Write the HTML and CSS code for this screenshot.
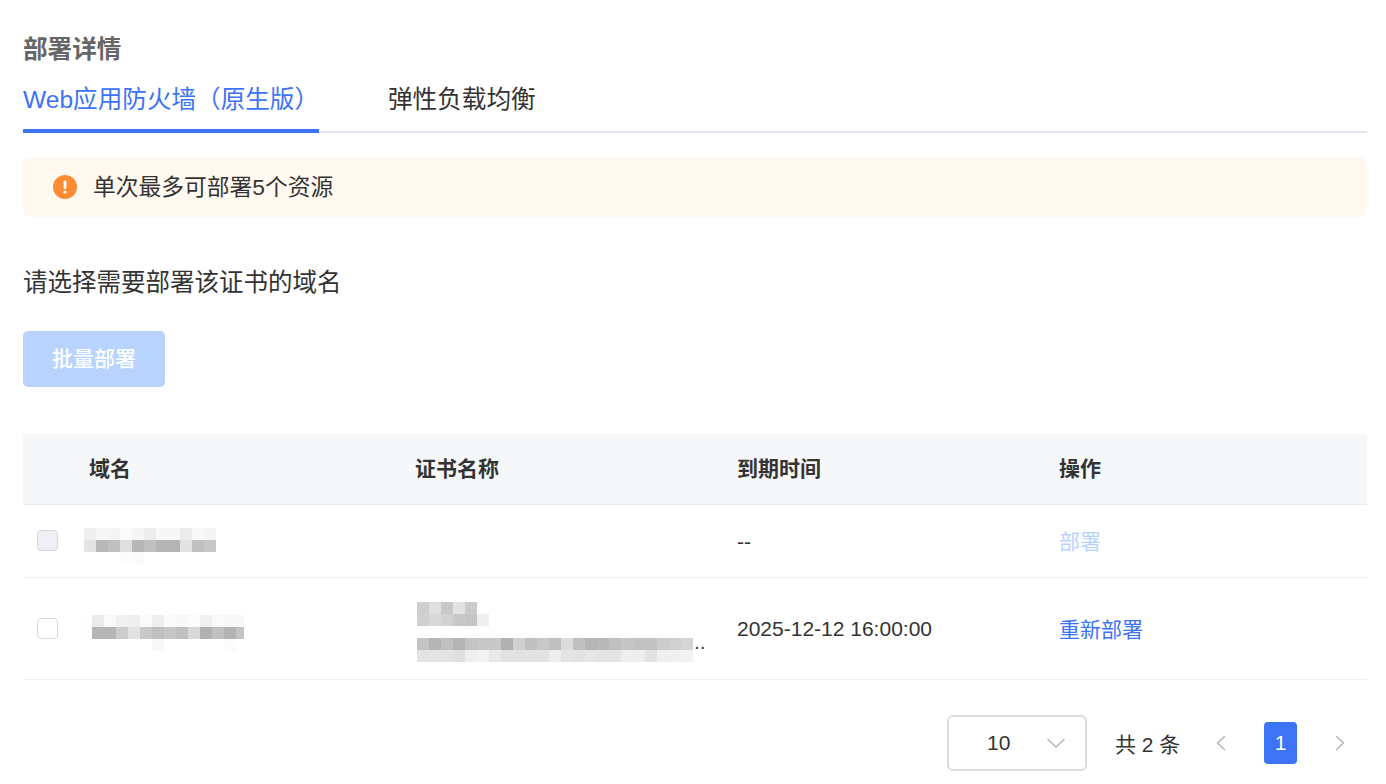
FILE: index.html
```html
<!DOCTYPE html>
<html lang="zh-CN">
<head>
<meta charset="utf-8">
<title>部署详情</title>
<link rel="stylesheet" href="styles.css">
</head>
<body>
<main class="page">
  <h1 class="title">部署详情</h1>
  <nav class="tabs">
    <a class="tab tab-active">Web应用防火墙（原生版）</a>
    <a class="tab">弹性负载均衡</a>
  </nav>
  <div class="alert">
    <svg class="alert-icon" viewBox="0 0 24 24" width="24" height="24"><circle cx="12" cy="12" r="12" fill="#ff8c33"/><rect x="10.6" y="5.5" width="2.8" height="8.5" rx="1.2" fill="#fff"/><circle cx="12" cy="17" r="1.6" fill="#fff"/></svg>
    <span class="alert-text">单次最多可部署5个资源</span>
  </div>
  <p class="label">请选择需要部署该证书的域名</p>
  <button class="btn-batch" disabled>批量部署</button>
  <table class="table">
    <colgroup><col class="c0"><col class="c1"><col class="c2"><col class="c3"><col class="c4"></colgroup>
    <thead>
      <tr><th></th><th>域名</th><th>证书名称</th><th>到期时间</th><th>操作</th></tr>
    </thead>
    <tbody>
      <tr class="row-a">
        <td><span class="check check-disabled"></span></td>
        <td>
          <svg class="mosaic m-a" width="132" height="36" viewBox="0 0 132 36" shape-rendering="crispEdges">
            <rect x="0" y="0" width="12" height="12" fill="#efefef"/><rect x="12" y="0" width="12" height="12" fill="#f6f6f6"/><rect x="24" y="0" width="12" height="12" fill="#f5f5f5"/><rect x="36" y="0" width="12" height="12" fill="#fafafa"/><rect x="48" y="0" width="12" height="12" fill="#f5f5f5"/><rect x="60" y="0" width="12" height="12" fill="#ececec"/><rect x="72" y="0" width="24" height="12" fill="#f7f7f7"/><rect x="96" y="0" width="12" height="12" fill="#ebebeb"/><rect x="108" y="0" width="12" height="12" fill="#f8f8f8"/><rect x="120" y="0" width="12" height="12" fill="#f5f5f5"/>
            <rect x="0" y="12" width="12" height="12" fill="#e4e4e4"/><rect x="12" y="12" width="12" height="12" fill="#b9b9b9"/><rect x="24" y="12" width="12" height="12" fill="#c0c0c0"/><rect x="36" y="12" width="12" height="12" fill="#dfdfdf"/><rect x="48" y="12" width="12" height="12" fill="#b6b6b6"/><rect x="60" y="12" width="12" height="12" fill="#bfbfbf"/><rect x="72" y="12" width="24" height="12" fill="#b4b4b4"/><rect x="96" y="12" width="12" height="12" fill="#e2e2e2"/><rect x="108" y="12" width="12" height="12" fill="#c0c0c0"/><rect x="120" y="12" width="12" height="12" fill="#c8c8c8"/>
            <rect x="36" y="24" width="12" height="12" fill="#fcfcfc"/><rect x="48" y="24" width="12" height="12" fill="#fafafa"/>
          </svg>
        </td>
        <td></td>
        <td class="cell-latin">--</td>
        <td><a class="link link-disabled">部署</a></td>
      </tr>
      <tr class="row-b">
        <td><span class="check"></span></td>
        <td>
          <svg class="mosaic m-b" width="164" height="36" viewBox="0 0 164 36" shape-rendering="crispEdges">
            <rect x="0" y="0" width="12" height="24" fill="#fdfdfd"/>
            <rect x="12" y="0" width="12" height="12" fill="#ebebeb"/><rect x="24" y="0" width="12" height="12" fill="#f9f9f9"/><rect x="36" y="0" width="12" height="12" fill="#f0f0f0"/><rect x="48" y="0" width="12" height="12" fill="#eeeeee"/><rect x="60" y="0" width="12" height="12" fill="#fafafa"/><rect x="72" y="0" width="12" height="12" fill="#eeeeee"/><rect x="84" y="0" width="12" height="12" fill="#fafafa"/><rect x="96" y="0" width="12" height="12" fill="#f8f8f8"/><rect x="108" y="0" width="12" height="12" fill="#fbfbfb"/><rect x="120" y="0" width="12" height="12" fill="#f0f0f0"/><rect x="132" y="0" width="12" height="12" fill="#f9f9f9"/><rect x="144" y="0" width="20" height="12" fill="#f8f8f8"/>
            <rect x="12" y="12" width="24" height="12" fill="#b5b5b5"/><rect x="36" y="12" width="12" height="12" fill="#cccccc"/><rect x="48" y="12" width="12" height="12" fill="#e2e2e2"/><rect x="60" y="12" width="12" height="12" fill="#c8c8c8"/><rect x="72" y="12" width="12" height="12" fill="#c0c0c0"/><rect x="84" y="12" width="12" height="12" fill="#c6c6c6"/><rect x="96" y="12" width="12" height="12" fill="#c0c0c0"/><rect x="108" y="12" width="12" height="12" fill="#d8d8d8"/><rect x="120" y="12" width="12" height="12" fill="#b0b0b0"/><rect x="132" y="12" width="12" height="12" fill="#c0c0c0"/><rect x="144" y="12" width="12" height="12" fill="#b2b2b2"/><rect x="156" y="12" width="8" height="12" fill="#c4c4c4"/>
            <rect x="72" y="24" width="12" height="12" fill="#f8f8f8"/><rect x="144" y="24" width="12" height="12" fill="#fbfbfb"/>
          </svg>
        </td>
        <td>
          <div class="cert">
            <svg class="mosaic m-c" width="276" height="60" viewBox="0 0 276 60" shape-rendering="crispEdges">
              <rect x="0" y="0" width="12" height="12" fill="#cfcfcf"/><rect x="12" y="0" width="12" height="12" fill="#dfdfdf"/><rect x="24" y="0" width="12" height="12" fill="#c8c8c8"/><rect x="36" y="0" width="12" height="12" fill="#e2e2e2"/><rect x="48" y="0" width="12" height="12" fill="#cbcbcb"/>
              <rect x="0" y="12" width="12" height="12" fill="#d0d0d0"/><rect x="12" y="12" width="12" height="12" fill="#d8d8d8"/><rect x="24" y="12" width="12" height="12" fill="#d2d2d2"/><rect x="36" y="12" width="12" height="12" fill="#c8c8c8"/><rect x="48" y="12" width="12" height="12" fill="#c4c4c4"/><rect x="60" y="12" width="12" height="12" fill="#efefef"/>
              <rect x="0" y="36" width="12" height="12" fill="#c4c4c4"/><rect x="12" y="36" width="12" height="12" fill="#b4b4b4"/><rect x="24" y="36" width="12" height="12" fill="#c0c0c0"/><rect x="36" y="36" width="12" height="12" fill="#b4b4b4"/><rect x="48" y="36" width="12" height="12" fill="#c4c4c4"/><rect x="60" y="36" width="24" height="12" fill="#c8c8c8"/><rect x="84" y="36" width="12" height="12" fill="#b0b0b0"/><rect x="96" y="36" width="12" height="12" fill="#d0d0d0"/><rect x="108" y="36" width="12" height="12" fill="#c0c0c0"/><rect x="120" y="36" width="12" height="12" fill="#c8c8c8"/><rect x="132" y="36" width="12" height="12" fill="#c0c0c0"/><rect x="144" y="36" width="12" height="12" fill="#dcdcdc"/><rect x="156" y="36" width="12" height="12" fill="#c0c0c0"/><rect x="168" y="36" width="12" height="12" fill="#b4b4b4"/><rect x="180" y="36" width="12" height="12" fill="#b8b8b8"/><rect x="192" y="36" width="12" height="12" fill="#c0c0c0"/><rect x="204" y="36" width="12" height="12" fill="#c6c6c6"/><rect x="216" y="36" width="24" height="12" fill="#c2c2c2"/><rect x="240" y="36" width="12" height="12" fill="#cccccc"/><rect x="252" y="36" width="12" height="12" fill="#d0d0d0"/><rect x="264" y="36" width="12" height="12" fill="#d4d4d4"/>
              <rect x="0" y="48" width="36" height="12" fill="#e4e4e4"/><rect x="36" y="48" width="12" height="12" fill="#e0e0e0"/><rect x="48" y="48" width="12" height="12" fill="#eeeeee"/><rect x="60" y="48" width="12" height="12" fill="#f2f2f2"/><rect x="72" y="48" width="12" height="12" fill="#e8e8e8"/><rect x="84" y="48" width="48" height="12" fill="#e2e2e2"/><rect x="132" y="48" width="12" height="12" fill="#eeeeee"/><rect x="144" y="48" width="12" height="12" fill="#e4e4e4"/><rect x="156" y="48" width="12" height="12" fill="#e2e2e2"/><rect x="168" y="48" width="12" height="12" fill="#e6e6e6"/><rect x="180" y="48" width="24" height="12" fill="#e4e4e4"/><rect x="204" y="48" width="24" height="12" fill="#efefef"/><rect x="228" y="48" width="12" height="12" fill="#e2e2e2"/><rect x="240" y="48" width="12" height="12" fill="#efefef"/><rect x="252" y="48" width="12" height="12" fill="#f0f0f0"/><rect x="264" y="48" width="12" height="12" fill="#f2f2f2"/>
            </svg>
            <span class="dots">..</span>
          </div>
        </td>
        <td class="cell-latin">2025-12-12 16:00:00</td>
        <td><a class="link">重新部署</a></td>
      </tr>
    </tbody>
  </table>
  <div class="pager">
    <div class="select">
      <span class="select-value">10</span>
      <svg class="select-arrow" width="20" height="12" viewBox="0 0 20 12"><path d="M1.5 2 L10 10 L18.500 2" fill="none" stroke="#b5b7bd" stroke-width="1.500"/></svg>
    </div>
    <span class="total">共 2 条</span>
    <svg class="chev chev-prev" width="12" height="18" viewBox="0 0 12 18"><path d="M10 2 L2.500 9 L10 16" fill="none" stroke="#b5b7bd" stroke-width="1.500"/></svg>
    <span class="page-num">1</span>
    <svg class="chev chev-next" width="12" height="18" viewBox="0 0 12 18"><path d="M2 2 L9.500 9 L2 16" fill="none" stroke="#b5b7bd" stroke-width="1.500"/></svg>
  </div>
</main>
</body>
</html>
```

FILE: styles.css
```css
* { box-sizing: border-box; }
html, body { margin: 0; padding: 0; background: #fff; overflow: hidden; height: 100%; }
body { font-family: "Liberation Sans", "Noto Sans CJK SC", sans-serif; color: #333; font-size: 21px; }
.page { padding: 32px 19px 0 23px; }
.title { margin: 0; height: 34px; line-height: 36px; font-size: 24.6px; font-weight: 700; color: #666; }
.tabs { display: flex; gap: 69px; height: 67px; border-bottom: 2px solid #e4e6ef; }
.tab { display: block; height: 67px; line-height: 68px; font-size: 24.6px; color: #333; white-space: nowrap; }
.tab-active { width: 296px; color: #3d73f5; border-bottom: 4px solid #3d73f5; }
.alert { display: flex; align-items: center; gap: 16px; height: 60px; margin-top: 24px; padding-left: 30px; background: #fff9f0; border-radius: 6px; font-size: 22.75px; }
.alert-icon { flex: none; }
.alert-text { padding-bottom: 4px; }
.label { margin: 0; height: 36px; margin-top: 47px; line-height: 38px; font-size: 24.5px; }
.btn-batch { display: block; width: 142px; height: 56px; margin-top: 31px; padding: 0 0 4px; border: 0; border-radius: 5px; background: #b9d3ff; color: #fff; font: inherit; font-size: 21px; font-weight: 500; }
.table { width: 1344px; margin-top: 47px; border-collapse: collapse; table-layout: fixed; }
.c0 { width: 66px; }
.c1 { width: 326px; }
.c2, .c3 { width: 322px; }
.c4 { width: 308px; }
th { height: 70px; padding: 0 0 4px; background: #f6f7f9; border-bottom: 1px solid #e9ebf0; text-align: left; font-weight: 700; font-size: 21px; }
td { padding: 0; border-bottom: 1px solid #eeeff2; font-size: 21px; vertical-align: middle; }
.row-a td { height: 73px; }
.row-b td { height: 102px; }
.cell-latin { padding-top: 2px; }
.check { display: block; width: 21px; height: 21px; margin-left: 14px; border: 1px solid #d8d8dc; border-radius: 4px; background: #fff; }
.check-disabled { background: #eff0f5; }
.mosaic { display: block; }
.m-a { margin: 10px 0 0 -5px; }
.m-b { margin: 9px 0 0 -9px; }
.cert { position: relative; margin: 7px 0 0 2px; width: 300px; height: 60px; }
.dots { position: absolute; left: 277px; top: 28px; line-height: 24px; font-size: 21px; color: #444; }
.link { display: inline-block; color: #3d73f5; }
.link-disabled { padding-bottom: 2px; color: #b9d3ff; }
.pager { display: flex; align-items: center; justify-content: flex-end; height: 56px; margin-top: 35px; padding-right: 21px; }
.select { display: flex; align-items: center; width: 140px; height: 56px; padding-left: 38px; border: 2px solid #dcdcdc; border-radius: 6px; }
.select-value { width: 59px; }
.total { margin-left: 28px; width: 66px; white-space: nowrap; }
.chev-prev { margin-left: 34px; }
.page-num { width: 33px; height: 42px; margin: 0 37px 0 37px; line-height: 42px; text-align: center; color: #fff; background: #3d73f5; border-radius: 4px; }
```
